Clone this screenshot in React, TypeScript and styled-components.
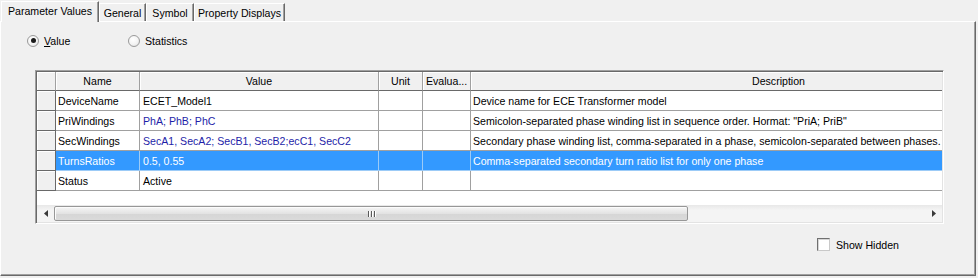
import React from 'react';
import styled, { createGlobalStyle } from 'styled-components';

const Global = createGlobalStyle`
  html, body { margin: 0; padding: 0; background: #f0f0f0; }
  body {
    font-family: "Liberation Sans", Arial, sans-serif;
    font-size: 10.6px;
    color: #000;
  }
  * { box-sizing: border-box; }
`;

const Window = styled.div`
  width: 978px;
  height: 278px;
  padding: 1px 2px 2px 0;
  display: flex;
  flex-direction: column;
`;

const TabStrip = styled.div`
  height: 20px;
  display: flex;
  align-items: flex-end;
  padding-left: 1px;
`;

const Tab = styled.div<{ $active?: boolean; $w: number }>`
  width: ${(p) => p.$w}px;
  height: ${(p) => (p.$active ? 21 : 18)}px;
  margin-bottom: ${(p) => (p.$active ? -1 : 0)}px;
  display: flex;
  align-items: center;
  justify-content: center;
  padding-bottom: ${(p) => (p.$active ? 2 : 0)}px;
  background: #f0f0f0;
  border-top: 1px solid #fff;
  border-left: 1px solid #fff;
  border-right: 1px solid #696969;
  box-shadow: inset -1px 0 0 #a0a0a0;
  position: relative;
  z-index: ${(p) => (p.$active ? 2 : 1)};
  white-space: nowrap;
`;

const Panel = styled.div`
  flex: 1;
  border-top: 1px solid #fff;
  border-left: 1px solid #fff;
  border-right: 1px solid #696969;
  border-bottom: 1px solid #696969;
  box-shadow: inset -1px -1px 0 #a0a0a0;
  display: flex;
  flex-direction: column;
  padding: 12px 0 0 0;
`;

const RadioRow = styled.div`
  display: flex;
  align-items: center;
  height: 13px;
  padding-left: 26px;
`;

const RadioOption = styled.label<{ $w: number }>`
  display: flex;
  align-items: center;
  gap: 5px;
  width: ${(p) => p.$w}px;
`;

const RadioCircle = styled.span<{ $on?: boolean }>`
  width: 12px;
  height: 12px;
  border-radius: 50%;
  border: 1px solid #9a9a9a;
  background: radial-gradient(circle at 40% 35%, #ffffff 0%, #f3f3f3 55%, #d8d8d8 100%);
  display: flex;
  align-items: center;
  justify-content: center;
  &::after {
    content: '';
    display: ${(p) => (p.$on ? 'block' : 'none')};
    width: 5px;
    height: 5px;
    border-radius: 50%;
    background: #1a1a1a;
  }
`;

const Underline = styled.span`
  text-decoration: underline;
`;

const GridFrame = styled.div`
  margin: 23px 0 0 34px;
  width: 909px;
  height: 154px;
  border-top: 1px solid #a0a0a0;
  border-left: 1px solid #a0a0a0;
  border-right: 1px solid #fff;
  border-bottom: 1px solid #fff;
  box-shadow: inset 1px 1px 0 #696969, inset -1px -1px 0 #e3e3e3;
  padding: 1px;
  display: flex;
  flex-direction: column;
  background: #fff;
`;

const GridViewport = styled.div`
  flex: 1;
  overflow: hidden;
`;

const Row = styled.div`
  display: grid;
  grid-template-columns: 19px 84px 239px 44px 48px 616px;
  width: max-content;
`;

const HeadCell = styled.div<{ $align?: string }>`
  height: 19px;
  background: #f0f0f0;
  border-right: 1px solid #a0a0a0;
  border-bottom: 1px solid #696969;
  box-shadow: inset 1px 1px 0 #fff;
  display: flex;
  align-items: center;
  justify-content: ${(p) => p.$align || 'center'};
  padding: 0 3px;
  white-space: nowrap;
  overflow: hidden;
`;

const RowHeader = styled.div`
  height: 20px;
  background: #f0f0f0;
  border-right: 1px solid #696969;
  border-bottom: 1px solid #696969;
  box-shadow: inset 1px 1px 0 #fff;
`;

const Cell = styled.div<{ $sel?: boolean; $blue?: boolean; $pad?: number }>`
  height: 20px;
  background: ${(p) => (p.$sel ? '#3399ff' : '#fff')};
  color: ${(p) => (p.$sel ? '#fff' : p.$blue ? '#1e1ea8' : '#000')};
  border-right: 1px solid ${(p) => (p.$sel ? '#9ccbf7' : '#a0a0a0')};
  border-bottom: 1px solid ${(p) => (p.$sel ? '#9ccbf7' : '#a0a0a0')};
  display: flex;
  align-items: center;
  padding: 0 ${(p) => p.$pad ?? 2}px;
  white-space: nowrap;
  overflow: hidden;
`;

const ScrollBar = styled.div`
  height: 17px;
  display: flex;
  align-items: stretch;
  background: linear-gradient(#e8e8e8, #f4f4f4 30%, #f4f4f4);
`;

const ArrowBtn = styled.div`
  width: 17px;
  display: flex;
  align-items: center;
  justify-content: center;
`;

const Track = styled.div`
  flex: 1;
  display: flex;
  align-items: stretch;
  padding: 1px 0;
`;

const Thumb = styled.div`
  border: 1px solid #979797;
  border-radius: 2px;
  background: linear-gradient(#f6f6f6, #e3e3e3 50%, #d6d6d6 51%, #dadada);
  box-shadow: inset 1px 1px 0 #fcfcfc;
  display: flex;
  align-items: center;
  justify-content: center;
  gap: 2px;
`;

const Grip = styled.span`
  width: 1px;
  height: 6px;
  background: #5a5a5a;
  box-shadow: 1px 0 0 #fff;
`;

const Footer = styled.div`
  display: flex;
  justify-content: flex-start;
  padding: 14px 0 0 816px;
`;

const CheckLabel = styled.label`
  display: flex;
  align-items: center;
  gap: 6px;
  white-space: nowrap;
`;

const CheckBox = styled.span`
  width: 13px;
  height: 13px;
  border: 1px solid #707070;
  border-right-color: #c9c9c9;
  border-bottom-color: #c9c9c9;
  background: #fff;
  box-shadow: inset 1px 1px 0 #d6d6d6;
`;

type Param = { name: string; value: string; desc: string; blue?: boolean; sel?: boolean };

const params: Param[] = [
  { name: 'DeviceName', value: 'ECET_Model1', desc: 'Device name for ECE Transformer model' },
  {
    name: 'PriWindings',
    value: 'PhA; PhB; PhC',
    blue: true,
    desc: 'Semicolon-separated phase winding list in sequence order. Hormat: "PriA; PriB"',
  },
  {
    name: 'SecWindings',
    value: 'SecA1, SecA2; SecB1, SecB2;ecC1, SecC2',
    blue: true,
    desc: 'Secondary phase winding list, comma-separated in a phase, semicolon-separated between phases.',
  },
  {
    name: 'TurnsRatios',
    value: '0.5, 0.55',
    sel: true,
    desc: 'Comma-separated secondary turn ratio list for only one phase',
  },
  { name: 'Status', value: 'Active', desc: '' },
];

const LeftArrow = () => (
  <svg width="4" height="7" viewBox="0 0 4 7">
    <path d="M4 0 L0 3.5 L4 7 Z" fill="#3a3a3a" />
  </svg>
);
const RightArrow = () => (
  <svg width="4" height="7" viewBox="0 0 4 7">
    <path d="M0 0 L4 3.5 L0 7 Z" fill="#3a3a3a" />
  </svg>
);

export default function App() {
  return (
    <>
      <Global />
      <Window>
        <TabStrip>
          <Tab $active $w={98}>Parameter Values</Tab>
          <Tab $w={47}>General</Tab>
          <Tab $w={48}>Symbol</Tab>
          <Tab $w={91}>Property Displays</Tab>
        </TabStrip>
        <Panel>
          <RadioRow>
            <RadioOption $w={101}>
              <RadioCircle $on />
              <span>
                <Underline>V</Underline>alue
              </span>
            </RadioOption>
            <RadioOption $w={100}>
              <RadioCircle />
              <span>Statistics</span>
            </RadioOption>
          </RadioRow>
          <GridFrame>
            <GridViewport>
              <Row>
                <HeadCell />
                <HeadCell>Name</HeadCell>
                <HeadCell>Value</HeadCell>
                <HeadCell>Unit</HeadCell>
                <HeadCell $align="flex-start">Evalua...</HeadCell>
                <HeadCell>Description</HeadCell>
              </Row>
              {params.map((p) => (
                <Row key={p.name}>
                  <RowHeader />
                  <Cell $sel={p.sel}>{p.name}</Cell>
                  <Cell $sel={p.sel} $blue={p.blue} $pad={3}>
                    {p.value}
                  </Cell>
                  <Cell $sel={p.sel} />
                  <Cell $sel={p.sel} />
                  <Cell $sel={p.sel}>{p.desc}</Cell>
                </Row>
              ))}
            </GridViewport>
            <ScrollBar>
              <ArrowBtn>
                <LeftArrow />
              </ArrowBtn>
              <Track>
                <Thumb style={{ width: 634 }}>
                  <Grip />
                  <Grip />
                  <Grip />
                </Thumb>
              </Track>
              <ArrowBtn>
                <RightArrow />
              </ArrowBtn>
            </ScrollBar>
          </GridFrame>
          <Footer>
            <CheckLabel>
              <CheckBox />
              <span>Show Hidden</span>
            </CheckLabel>
          </Footer>
        </Panel>
      </Window>
    </>
  );
}
